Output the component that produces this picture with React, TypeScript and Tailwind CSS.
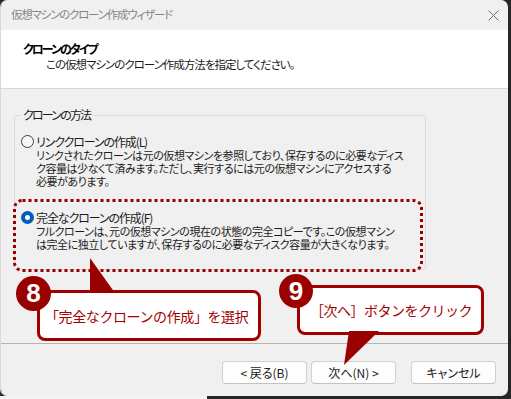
import React from "react";

const jp = "font-['Noto_Sans_CJK_JP',sans-serif]";
const palt = "[font-feature-settings:'palt']";

const Radio = ({ checked }: { checked?: boolean }) =>
  checked ? (
    <span className="flex h-[13px] w-[13px] shrink-0 items-center justify-center rounded-full bg-[#005fb8]">
      <span className="h-[5px] w-[5px] rounded-full bg-white" />
    </span>
  ) : (
    <span className="h-[13px] w-[13px] shrink-0 rounded-full border border-[#3c3c3c] bg-[#f7f7f7]" />
  );

const Option = ({
  checked,
  label,
  lines,
  className,
}: {
  checked?: boolean;
  label: string;
  lines: string[];
  className?: string;
}) => (
  <div className={className}>
    <div className="flex items-center gap-[2px] pl-[6px] leading-[15px]">
      <Radio checked={checked} />
      <span className="tracking-[-1.1px]">{label}</span>
    </div>
    <div className="pl-[21px] text-[11px] leading-[13px] tracking-[-0.45px]">
      {lines.map((l, i) => (
        <div key={i}>{l}</div>
      ))}
    </div>
  </div>
);

const Button = ({ children, className }: { children: React.ReactNode; className?: string }) => (
  <div
    className={`flex h-[23px] w-[85px] items-center justify-center rounded-[4px] border border-[#d0d0d0] border-b-[#c2c2c2] bg-[#fdfdfd] text-[12px] text-[#1b1b1b] ${className ?? ""}`}
  >
    {children}
  </div>
);

export default function App() {
  return (
    <div className={`flex h-[399px] w-[511px] flex-col bg-[#262626] text-[12px] text-[#1b1b1b] ${jp}`}>
      <div className={`relative flex h-[396px] w-[508px] flex-col overflow-hidden rounded-[7px] border-l border-[#d8d8d8] ${palt}`}>
        {/* title bar */}
        <div className="flex h-[30px] items-center justify-between bg-[#f0f0f0] pl-[10px] pr-[9px]">
          <span className="text-[11.5px] tracking-[-1.2px] text-[#858585]">仮想マシンのクローン作成ウィザード</span>
          <svg width="11" height="11" viewBox="0 0 11 11">
            <path d="M0.5 0.5 L10.5 10.5 M10.5 0.5 L0.5 10.5" stroke="#707070" strokeWidth="1" />
          </svg>
        </div>

        {/* header */}
        <div className="h-[59px] border-b border-[#d6d6d6] bg-white pt-[11px]">
          <div className="pl-[22px] font-bold leading-[16px] tracking-[-2px] text-black">クローンのタイプ</div>
          <div className="pl-[45px] text-[11.5px] leading-[14px] tracking-[-1px]">
            この仮想マシンのクローン作成方法を指定してください。
          </div>
        </div>

        {/* body */}
        <div className="h-[254px] bg-[#f0f0f0] pl-[13px] pt-[18px]">
          <fieldset className="h-[163px] w-[412px] min-w-0 rounded-[2px] border border-[#dcdcdc] whitespace-nowrap">
            <legend className="ml-[5px] px-[3px] leading-[16px] tracking-[-1.8px]">クローンの方法</legend>
            <Option
              className="mt-[11px]"
              label="リンククローンの作成(L)"
              lines={[
                "リンクされたクローンは元の仮想マシンを参照しており、保存するのに必要なディス",
                "ク容量は少なくて済みます。ただし、実行するには元の仮想マシンにアクセスする",
                "必要があります。",
              ]}
            />
            <Option
              checked
              className="mt-[22px]"
              label="完全なクローンの作成(F)"
              lines={[
                "フルクローンは、元の仮想マシンの現在の状態の完全コピーです。この仮想マシン",
                "は完全に独立していますが、保存するのに必要なディスク容量が大きくなります。",
              ]}
            />
          </fieldset>
        </div>

        {/* footer */}
        <div className="flex h-[53px] justify-end gap-[4px] border-t border-[#b4b4b4] bg-[#f0f0f0] pr-[12px] pt-[17px]">
          <Button>&lt; 戻る(B)</Button>
          <Button className="w-[84px]">次へ(N) &gt;</Button>
          <Button className="ml-[11px]">キャンセル</Button>
        </div>

        {/* annotations */}
        <svg className="absolute left-[12px] top-[199px]" width="410" height="73">
          <rect x="1.5" y="1.5" width="407" height="70" rx="8" fill="none" stroke="#9b0000" strokeWidth="3" strokeDasharray="3 3" />
        </svg>

        <div className="absolute left-[36px] top-[290px] flex h-[51px] w-[224px] items-center rounded-[8px] border-[3px] border-[#a00000] bg-white pl-[5px] pt-[2px] text-[14px] tracking-[-0.4px] text-[#a40000] [font-feature-settings:normal]">
          「完全なクローンの作成」を選択
        </div>
        <div className="absolute left-[296px] top-[285px] flex h-[50px] w-[187px] items-center rounded-[8px] border-[3px] border-[#a00000] bg-white pl-[10px] text-[14px] tracking-[-0.5px] text-[#a40000] [font-feature-settings:normal]">
          ［次へ］ボタンをクリック
        </div>
        <svg className="absolute left-0 top-0" width="508" height="396">
          <polygon points="89,258 89,293 114,293" fill="#990000" />
          <polygon points="348,331 378,331 343,365" fill="#990000" />
        </svg>
        <div className="absolute left-[15px] top-[276px] flex h-[35px] w-[35px] items-center justify-center rounded-full bg-[#990000] font-['Liberation_Sans',sans-serif] text-[26px] font-bold text-white">
          8
        </div>
        <div className="absolute left-[278px] top-[274px] flex h-[34px] w-[34px] items-center justify-center rounded-full bg-[#990000] font-['Liberation_Sans',sans-serif] text-[26px] font-bold text-white">
          9
        </div>
      </div>
      <div className="flex h-[3px]">
        <div className="w-[207px] bg-[#f3f3f3]" />
      </div>
    </div>
  );
}
